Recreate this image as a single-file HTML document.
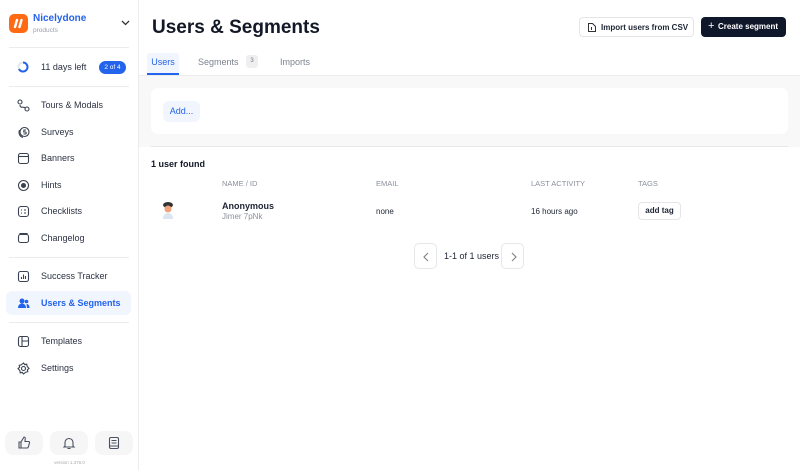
<!DOCTYPE html>
<html><head><meta charset="utf-8"><style>
*{box-sizing:border-box;margin:0;padding:0}
body{width:800px;height:470px;overflow:hidden;font-family:"Liberation Sans",sans-serif;background:#fff;color:#1d2433;position:relative}
.side{position:absolute;left:0;top:0;width:139px;height:470px;background:#fff;border-right:1px solid #ececef}
.logo{position:absolute;left:9px;top:14px;width:19px;height:19px;border-radius:5px;background:#ff6a13}
.brand{position:absolute;left:33px;top:13px;font-size:10px;font-weight:bold;color:#2463eb}
.sub{position:absolute;left:33px;top:27px;font-size:6.5px;color:#9aa0aa}
.hr{position:absolute;left:9px;width:120px;height:1px;background:#ececef}
.nav{position:absolute;left:6px;width:125px;height:24px;border-radius:6px;font-size:9px;color:#2a3140;line-height:24px;padding-left:35px}
.nav svg{position:absolute;left:11px;top:6px}
.nav.act{background:#f1f5fe;color:#2463eb;font-weight:bold}
.bb{position:absolute;top:431px;width:38px;height:24px;border-radius:8px;background:#f6f6f7}
.bb svg{position:absolute;left:12px;top:5px}
.main{position:absolute;left:139px;top:0;right:0;height:470px}
h1{position:absolute;left:13px;top:17px;font-size:19px;font-weight:bold;color:#121826}
.btn{position:absolute;top:17px;height:20px;border-radius:4px;font-size:8px;font-weight:bold;line-height:20px}
.tab{position:absolute;top:53px;font-size:9px;color:#7c8390;height:22px;line-height:18px}
.gray{position:absolute;left:0;right:0;top:75px;height:72px;background:#f8f8f9;border-top:1px solid #ececef}
.card{position:absolute;left:12px;top:12px;right:12px;height:46px;background:#fff;border-radius:7px}
.th{position:absolute;top:179px;font-size:7.5px;color:#8a909b}
.td{position:absolute;font-size:8px;color:#1d2433}
</style></head><body>
<div class="side">
 <div class="logo"><svg width="19" height="19"><path d="M6 13 L8 6 M10.5 13 L12.5 6" stroke="#fff" stroke-width="2.4" stroke-linecap="round"/></svg></div>
 <div class="brand">Nicelydone</div><div class="sub">products</div>
 <svg style="position:absolute;left:121px;top:20px" width="9" height="6"><path d="M1 1l3.5 3.5L8 1" stroke="#333" stroke-width="1.3" fill="none"/></svg>
 <div class="hr" style="top:47px"></div>
 <svg style="position:absolute;left:17px;top:61px" width="12" height="12"><circle cx="6" cy="6" r="4.5" stroke="#e6e8ec" stroke-width="2" fill="none"/><path d="M6 1.5A4.5 4.5 0 0 1 6 10.5A4.5 4.5 0 0 1 2 8" stroke="#2463eb" stroke-width="2" fill="none"/></svg>
 <div style="position:absolute;left:41px;top:62px;font-size:9px;color:#2a3140">11 days left</div>
 <div style="position:absolute;left:99px;top:61px;width:27px;height:13px;border-radius:7px;background:#2463eb;color:#fff;font-size:6.5px;text-align:center;line-height:13px">2 of 4</div>
 <div class="hr" style="top:86px"></div>
 <div class="nav" style="top:93px"><svg width="13" height="13" fill="none" stroke="#3a4150" stroke-width="1.1"><circle cx="3" cy="3" r="2"/><circle cx="10" cy="10" r="2"/><path d="M3 6c0 4 4 1 5 3"/></svg>Tours &amp; Modals</div>
 <div class="nav" style="top:120px"><svg width="13" height="13" fill="none" stroke="#3a4150" stroke-width="1.1"><circle cx="7.5" cy="6" r="4.5"/><path d="M2.5 4c-1.2 3 0 6.5 3.5 7.5"/><path d="M9 4H7l-.3 2h1.5a1 1 0 0 1 0 2H6.5"/></svg>Surveys</div>
 <div class="nav" style="top:146px"><svg width="13" height="13" fill="none" stroke="#3a4150" stroke-width="1.1"><rect x="1.5" y="1.5" width="10" height="10" rx="2"/><path d="M1.5 4.5h10"/></svg>Banners</div>
 <div class="nav" style="top:173px"><svg width="13" height="13" fill="none" stroke="#3a4150" stroke-width="1.1"><circle cx="6.5" cy="6.5" r="5"/><circle cx="6.5" cy="6.5" r="2" fill="#3a4150"/></svg>Hints</div>
 <div class="nav" style="top:199px"><svg width="13" height="13" fill="none" stroke="#3a4150" stroke-width="1.1"><rect x="1.5" y="1.5" width="10" height="10" rx="2.5"/><path d="M4 5h1M7 5h2M4 8h1M7 8h2"/></svg>Checklists</div>
 <div class="nav" style="top:226px"><svg width="13" height="13" fill="none" stroke="#3a4150" stroke-width="1.1"><rect x="1.5" y="2.5" width="10" height="8" rx="2"/><path d="M3 2.5V1.5h7v1"/></svg>Changelog</div>
 <div class="hr" style="top:257px"></div>
 <div class="nav" style="top:264px"><svg width="13" height="13" fill="none" stroke="#3a4150" stroke-width="1.1"><rect x="1.5" y="1.5" width="10" height="10" rx="2"/><path d="M4.5 9V7M6.5 9V4.5M8.5 9V6"/></svg>Success Tracker</div>
 <div class="nav act" style="top:291px"><svg width="13" height="13" fill="#2463eb"><circle cx="5" cy="4" r="2.5"/><path d="M1 11c0-3 2-4.5 4-4.5s4 1.5 4 4.5z"/><circle cx="9.5" cy="4.5" r="1.8"/><path d="M9.5 7c2 0 3 1.5 3 4h-2.5z"/></svg>Users &amp; Segments</div>
 <div class="hr" style="top:322px"></div>
 <div class="nav" style="top:329px"><svg width="13" height="13" fill="none" stroke="#3a4150" stroke-width="1.1"><rect x="1.5" y="1.5" width="10" height="10" rx="2"/><path d="M5 1.5v10M5 6h6.5"/></svg>Templates</div>
 <div class="nav" style="top:356px"><svg width="13" height="13" fill="none" stroke="#3a4150" stroke-width="1.1"><circle cx="6.5" cy="6.5" r="2"/><path d="M6.5 1l1.2 1.6 2-.4.4 2L12 6.5l-1.6 1.2.4 2-2 .4L6.5 12l-1.2-1.6-2 .4-.4-2L1 6.5l1.6-1.2-.4-2 2-.4z"/></svg>Settings</div>
 <div class="bb" style="left:5px"><svg width="14" height="14" fill="none" stroke="#4a5160" stroke-width="1.1"><path d="M2 6h2v6H2zM4 6l3-5c1 0 1.5 1 1.2 2L8 5.5h3.5c.8 0 1.2.7 1 1.4l-1.2 4.2c-.2.6-.6.9-1.2.9H4"/></svg></div>
 <div class="bb" style="left:50px"><svg width="14" height="14" fill="none" stroke="#4a5160" stroke-width="1.1"><path d="M3 10V6.5a4 4 0 0 1 8 0V10l1 1H2zM5.5 12.5h3"/></svg></div>
 <div class="bb" style="left:95px"><svg width="14" height="14" fill="none" stroke="#4a5160" stroke-width="1.1"><rect x="2.5" y="1.5" width="9" height="11" rx="1.5"/><path d="M4.5 4.5h5M4.5 7h5M2.5 10h9"/></svg></div>
 <div style="position:absolute;left:0;width:139px;top:460px;text-align:center;font-size:4.5px;color:#aaa">version 1.378.0</div>
</div>
<div class="main">
 <h1>Users &amp; Segments</h1>
 <div class="btn" style="left:440px;width:115px;border:1px solid #e3e5e9;background:#fff;color:#1d2433;padding-left:21px"><svg style="position:absolute;left:6px;top:4px" width="11" height="11" fill="none" stroke="#333" stroke-width="1"><path d="M2.5 1.5h4l3 3v5h-7z"/><path d="M5.5 5v3"/></svg>Import users from CSV</div>
 <div class="btn" style="left:562px;width:85px;background:#0f172a;color:#fff;padding-left:17px"><span style="position:absolute;left:7px;top:-1px;font-size:11px;font-weight:normal">+</span>Create segment</div>
 <div class="tab" style="left:8px;width:32px;background:#f1f5fe;color:#2463eb;text-align:center;border-bottom:2px solid #2463eb;border-radius:3px 3px 0 0">Users</div>
 <div class="tab" style="left:59px">Segments</div>
 <div style="position:absolute;left:107px;top:55px;width:12px;height:13px;border-radius:3px;background:#efeff1;font-size:6px;color:#777;text-align:center;line-height:13px">3</div>
 <div class="tab" style="left:141px">Imports</div>
 <div class="gray"><div class="card"><div style="position:absolute;left:12px;top:13px;width:37px;height:21px;border-radius:6px;background:#f1f5fe;color:#2463eb;font-size:9px;line-height:21px;text-align:center">Add...</div></div></div>
 <div style="position:absolute;left:12px;right:12px;top:146px;height:1px;background:#e8e8eb"></div>
 <div style="position:absolute;left:12px;top:159px;font-size:9px;font-weight:bold;color:#121826">1 user found</div>
 <div class="th" style="left:83px">NAME / ID</div>
 <div class="th" style="left:237px">EMAIL</div>
 <div class="th" style="left:392px">LAST ACTIVITY</div>
 <div class="th" style="left:499px">TAGS</div>
 <svg style="position:absolute;left:22px;top:201px" width="14" height="18"><ellipse cx="7" cy="4" rx="5" ry="3" fill="#333"/><circle cx="7" cy="8" r="3.5" fill="#f0a27a"/><path d="M2 18c0-4 2-6 5-6s5 2 5 6z" fill="#dbe6f2"/></svg>
 <div class="td" style="left:83px;top:201px;font-size:9px;font-weight:bold">Anonymous</div>
 <div class="td" style="left:83px;top:212px;color:#8a909b">Jimer 7pNk</div>
 <div class="td" style="left:237px;top:207px">none</div>
 <div class="td" style="left:392px;top:207px">16 hours ago</div>
 <div style="position:absolute;left:499px;top:202px;width:43px;height:18px;border:1px solid #e3e5e9;border-radius:4px;font-size:8px;font-weight:bold;text-align:center;line-height:16px">add tag</div>
 <div style="position:absolute;left:275px;top:243px;width:23px;height:26px;border:1px solid #e6e7ea;border-radius:5px"><svg style="position:absolute;left:7px;top:8px" width="8" height="10"><path d="M6 1L2 5l4 4" stroke="#888" stroke-width="1.2" fill="none"/></svg></div>
 <div class="td" style="left:305px;top:251px;font-size:9px">1-1 of 1 users</div>
 <div style="position:absolute;left:362px;top:243px;width:23px;height:26px;border:1px solid #e6e7ea;border-radius:5px"><svg style="position:absolute;left:8px;top:8px" width="8" height="10"><path d="M2 1l4 4-4 4" stroke="#888" stroke-width="1.2" fill="none"/></svg></div>
</div>
</body></html>
